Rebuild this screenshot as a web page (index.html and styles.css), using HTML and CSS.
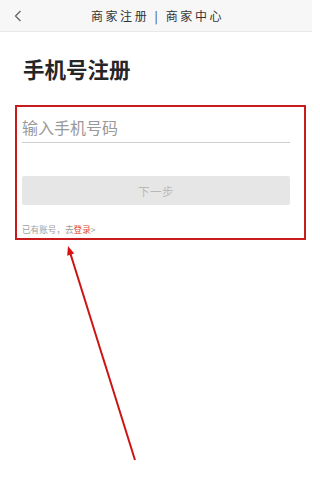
FILE: index.html
```html
<!DOCTYPE html>
<html lang="zh-CN">
<head>
<meta charset="utf-8">
<title>手机号注册</title>
<link rel="stylesheet" href="styles.css">
</head>
<body>
<header class="topbar">
  <svg class="back" width="8" height="12" viewBox="0 0 8 12"><path d="M6.5 1 L1.5 6 L6.5 11" fill="none" stroke="#666" stroke-width="1.3"/></svg>
  <div class="title">商家注册 | 商家中心</div>
</header>
<main class="page">
  <h1 class="heading">手机号注册</h1>
  <div class="field"><span class="placeholder">输入手机号码</span></div>
  <div class="btn">下一步</div>
  <p class="login">已有账号，去<span class="login-link">登录</span>&gt;</p>
</main>
<div class="annot-box"></div>
<svg class="annot-arrow" width="312" height="499" viewBox="0 0 312 499">
  <line x1="135" y1="460" x2="70.5" y2="254" stroke="#cc1414" stroke-width="2"/>
  <polygon points="68,246 74.2,253.6 67.2,255.8" fill="#dd1010"/>
</svg>
</body>
</html>
```
FILE: styles.css
```css
html, body {
  margin: 0;
  padding: 0;
  background: #fff;
}
body {
  width: 312px;
  height: 499px;
  position: relative;
  overflow: hidden;
  font-family: "Noto Sans CJK SC", "Noto Sans", sans-serif;
}
.topbar {
  height: 31px;
  background: #f7f7f7;
  border-bottom: 1px solid #e9e9e9;
  display: flex;
  align-items: center;
  justify-content: center;
  position: relative;
}
.back {
  position: absolute;
  left: 14px;
  top: 10px;
}
.title {
  font-size: 12px;
  letter-spacing: 2.6px;
  color: #333;
  line-height: 16px;
  margin-left: 3px;
  margin-top: 1px;
}
.page {
  padding: 0 22px;
}
.heading {
  margin: 22px 0 0 1px;
  font-size: 21.5px;
  line-height: 30px;
  font-weight: 700;
  color: #262626;
}
.field {
  margin-top: 31px;
  height: 24px;
  padding-bottom: 3px;
  border-bottom: 1.2px solid #cfcfcf;
  display: flex;
  align-items: center;
}
.placeholder {
  font-size: 16px;
  line-height: 24px;
  color: #999;
}
.btn {
  margin-top: 33px;
  height: 29px;
  background: #e6e6e6;
  border-radius: 2px;
  display: flex;
  align-items: center;
  justify-content: center;
  font-size: 11.5px;
  color: #b8b8b8;
  letter-spacing: 0.5px;
}
.login {
  margin: 19px 0 0;
  font-size: 8.6px;
  line-height: 10px;
  color: #a0a0a0;
}
.login-link {
  color: #e04a32;
}
.annot-box {
  position: absolute;
  left: 15px;
  top: 105px;
  width: 287px;
  height: 131px;
  border: 2px solid #c81b1b;
}
.annot-arrow {
  position: absolute;
  left: 0;
  top: 0;
  pointer-events: none;
}
```
